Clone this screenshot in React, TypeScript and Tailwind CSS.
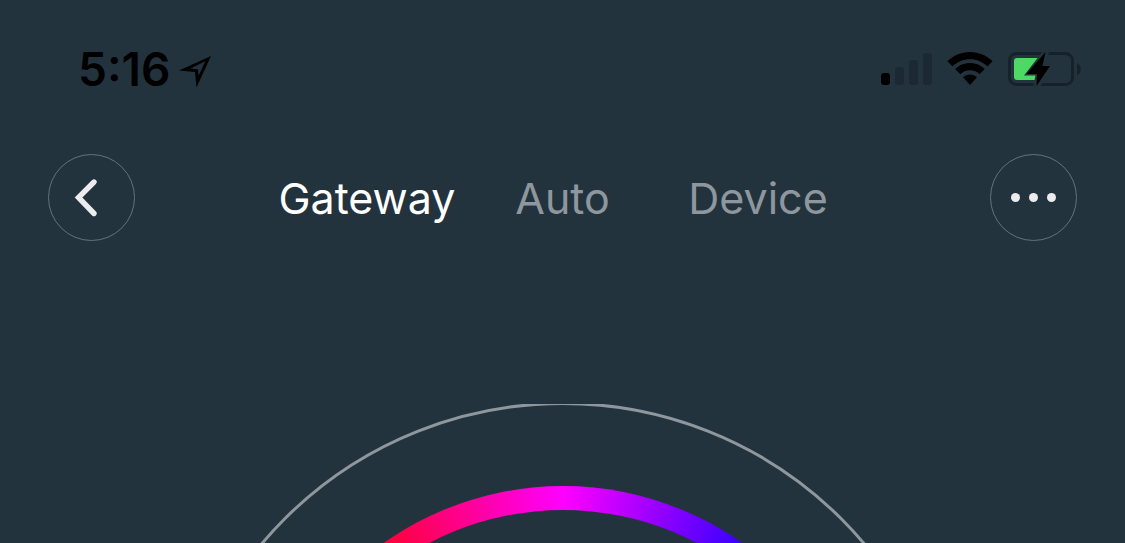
import React, { useState } from "react";

const tabs = ["Gateway", "Auto", "Device"];

function LocationArrow() {
  return (
    <svg className="h-9 w-9" viewBox="0 -2 36 36" aria-hidden="true">
      <path
        fillRule="evenodd"
        d="M35 3 L20.5 34.5 L19 19 L3 17.5 Z M29.3 8.3 L14.5 15.6 L22 16.4 L22.6 22.6 Z"
      />
    </svg>
  );
}

function Signal() {
  return (
    <svg className="h-9 w-13" viewBox="0 0 52 36" aria-hidden="true">
      <rect x="0" y="22" width="9" height="12" rx="3" />
      <g fill="#1d2932">
        <rect x="14" y="16" width="9" height="18" rx="3" />
        <rect x="28" y="9" width="9" height="25" rx="3" />
        <rect x="42" y="2" width="9" height="32" rx="3" />
      </g>
    </svg>
  );
}

function Wifi() {
  return (
    <svg className="h-9 w-12" viewBox="0 0 48 36" aria-hidden="true">
      <path d="M24 1 C32.8 1 40.8 4.6 46.6 10.2 L41.4 15.4 C37 11 30.8 8.3 24 8.3 C17.2 8.3 11 11 6.6 15.4 L1.4 10.2 C7.2 4.6 15.2 1 24 1 Z" />
      <path d="M24 12 C29.8 12 35 14.3 38.8 18 L33.6 23.2 C31.1 20.8 27.7 19.3 24 19.3 C20.3 19.3 16.9 20.8 14.4 23.2 L9.2 18 C13 14.3 18.2 12 24 12 Z" />
      <path d="M24 23.4 C26.6 23.4 29 24.4 31 26.2 L24 34 L17 26.2 C19 24.4 21.4 23.4 24 23.4 Z" />
    </svg>
  );
}

function Battery() {
  return (
    <svg className="h-9 w-19" viewBox="0 0 76 36" aria-hidden="true">
      <rect x="2.5" y="2.5" width="63" height="31" rx="7" fill="none" stroke="#17212a" strokeWidth="3" />
      <path d="M70 12 C75 14 75 22 70 24.5 Z" fill="#17212a" />
      <path d="M10 7 H36 V29 H10 Q7 29 7 26 V10 Q7 7 10 7 Z" fill="#4cd964" />
      <path d="M36 0 L17 24.5 H28.5 L26 36 H33 L46 13.5 H39.5 L42 0 Z" fill="#23333e" />
      <path d="M38.5 1 L19.5 23 H30 L29.5 35 L43 15 H35.5 Z" />
    </svg>
  );
}

export default function App() {
  const [active, setActive] = useState("Gateway");
  return (
    <div className="flex h-screen flex-col overflow-hidden bg-[#23333e] font-['Inter',sans-serif]">
      <header className="flex items-center justify-between pt-[45px] pr-[42px] pl-[78px]">
        <div className="flex h-12 items-center gap-1.5">
          <time className="text-[46px] leading-none font-semibold">5:16</time>
          <LocationArrow />
        </div>
        <div className="flex items-center gap-[13px]">
          <Signal />
          <Wifi />
          <Battery />
        </div>
      </header>

      <nav className="mt-[61px] flex items-center justify-between px-12">
        <button
          aria-label="Back"
          className="flex size-[87px] items-center justify-center rounded-full border border-[#63717b]"
        >
          <svg className="size-12" viewBox="0 0 48 48" aria-hidden="true">
            <path d="M26 8 L10.5 23.5 L26 39.5" fill="none" stroke="#ececec" strokeWidth="5.4" strokeLinecap="round" />
          </svg>
        </button>
        <div className="grid w-[57%] grid-cols-3 pt-0.5">
          {tabs.map((tab) => (
            <button
              key={tab}
              onClick={() => setActive(tab)}
              className={
                "text-[43px] leading-none " +
                (tab === active ? "text-white" : "text-[#8f979e]")
              }
            >
              {tab}
            </button>
          ))}
        </div>
        <button
          aria-label="More"
          className="flex size-[87px] items-center justify-center gap-[9px] rounded-full border border-[#63717b]"
        >
          <span className="size-[9px] rounded-full bg-[#ececec]" />
          <span className="size-[9px] rounded-full bg-[#ececec]" />
          <span className="size-[9px] rounded-full bg-[#ececec]" />
        </button>
      </nav>

      <main className="mt-[163px] flex min-h-0 flex-1 justify-center overflow-hidden">
        <div className="-mt-0.5 flex size-[790px] shrink-0 items-center justify-center rounded-full border-3 border-[#8f979e]">
          <div className="flex size-[622px] items-center justify-center rounded-full bg-[conic-gradient(#ff00ff_0deg,#0000ff_45deg,#00ffff_100deg,#00ff00_180deg,#ffff00_260deg,#ff0000_315deg,#ff00ff_360deg)]">
            <div className="size-[574px] rounded-full bg-[#23333e]" />
          </div>
        </div>
      </main>
    </div>
  );
}
